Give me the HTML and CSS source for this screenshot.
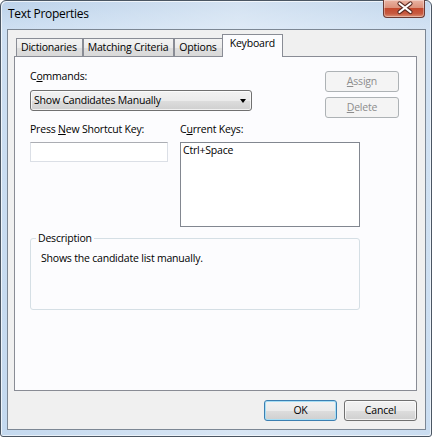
FILE: index.html
```html
<!DOCTYPE html>
<html>
	<head>
		<meta charset="utf-8">
		<title>Text Properties</title>
		<link rel="stylesheet" href="styles.css">
	</head>
	<body>
		<div class="window">
			<div class="titlebar">
				<span class="title">Text Properties</span>
				<div class="close">
					<svg width="42" height="18" viewBox="0 0 42 18">
						<path d="M15.5 4.5 L26.5 13 M26.5 4.5 L15.5 13" stroke="#5a2a22" stroke-width="4.2" stroke-linecap="round"/>
						<path d="M15.5 4.5 L26.5 13 M26.5 4.5 L15.5 13" stroke="#ffffff" stroke-width="2.2" stroke-linecap="round"/>
					</svg>
				</div>
			</div>
			<div class="client">
				<div class="tabs">
					<div class="tab">Dictionaries</div>
					<div class="tab">Matching Criteria</div>
					<div class="tab">Options</div>
					<div class="tab active">Keyboard</div>
				</div>
				<div class="panel">
					<div class="row-top">
						<div class="cmd">
							<div class="label">C<u>o</u>mmands:</div>
							<div class="combo">
								<span>Show Candidates Manually</span>
								<span class="arrow"></span>
							</div>
						</div>
						<div class="side">
							<div class="btn disabled"><u>A</u>ssign</div>
							<div class="btn disabled"><u>D</u>elete</div>
						</div>
					</div>
					<div class="row-keys">
						<div class="col-new">
							<div class="label">Press <u>N</u>ew Shortcut Key:</div>
							<div class="textbox"></div>
						</div>
						<div class="col-cur">
							<div class="label">C<u>u</u>rrent Keys:</div>
							<div class="listbox">Ctrl+Space</div>
						</div>
					</div>
					<fieldset class="desc">
						<legend>Description</legend>
						<p>Shows the candidate list manually.</p>
					</fieldset>
				</div>
				<div class="footer">
					<div class="btn default">OK</div>
					<div class="btn">Cancel</div>
				</div>
			</div>
		</div>
	</body>
</html>
```

FILE: styles.css
```css
*{
	margin: 0;
	padding: 0;
	box-sizing: border-box;
}
body{
	width: 432px;
	height: 437px;
	font-family: "Open Sans", "Liberation Sans", sans-serif;
	font-size: 10.5px;
	letter-spacing: -0.2px;
	line-height: 15px;
	color: #000;
	background: #fff;
}
.window{
	height: 437px;
	display: flex;
	flex-direction: column;
	padding: 0 5px 6px 6px;
	border: 1px solid #4b5663;
	border-radius: 6px 6px 3px 3px;
	background: linear-gradient(to right, rgba(255,255,255,0) 0%, rgba(255,255,255,0.35) 55%, rgba(255,255,255,0.1) 100%),
		linear-gradient(to bottom, #bcd2ea 0px, #cddff2 28px, #c4d9ef 100%);
	box-shadow: inset 1px 1px 0 rgba(255,255,255,0.7), inset -1px -1px 0 rgba(255,255,255,0.6);
}
.titlebar{
	height: 28px;
	display: flex;
	justify-content: space-between;
	align-items: flex-start;
}
.title{
	font-size: 12px;
	letter-spacing: -0.3px;
	line-height: 16px;
	margin: 5px 0 0 1px;
}
.close{
	width: 42px;
	height: 18px;
	margin: -1px 1px 0 0;
	border: 1px solid #6b3a33;
	border-top: 0;
	border-radius: 0 0 4px 4px;
	background: linear-gradient(to bottom, #eab3a3 0%, #dc927c 45%, #c4492e 50%, #c75a40 80%, #dc8f74 100%);
	box-shadow: inset 0 0 0 1px rgba(255,255,255,0.35);
}
.close svg{
	display: block;
	margin-top: -1px;
}
.client{
	flex: 1;
	display: flex;
	flex-direction: column;
	padding: 4px 8px 8px 6px;
	border: 1px solid #7c8794;
	background: #f0f0f0;
}
.tabs{
	height: 22px;
	display: flex;
	align-items: flex-end;
	padding-left: 2px;
}
.tab{
	height: 18px;
	padding: 1px 5px 0 4px;
	line-height: 15px;
	border: 1px solid #898c95;
	border-bottom: 0;
	background: linear-gradient(to bottom, #f3f3f3 0%, #ebebeb 50%, #dedede 51%, #d9d9d9 100%);
	white-space: nowrap;
}
.tab.active{
	height: 23px;
	margin: 0 0 -1px -1px;
	padding: 1px 7px 0 7px;
	background: #fcfcfe;
	position: relative;
	z-index: 1;
}
.panel{
	height: 335px;
	padding: 12px 17px 0 15px;
	border: 1px solid #898c95;
	background: #fcfcfe;
}
.row-top{
	display: flex;
	justify-content: space-between;
}
.cmd{
	width: 222px;
}
.label{
	height: 15px;
	white-space: nowrap;
}
.combo{
	height: 21px;
	margin-top: 6px;
	padding: 2px 5px 0 3px;
	display: flex;
	justify-content: space-between;
	border: 1px solid #707070;
	border-radius: 3px;
	background: linear-gradient(to bottom, #f2f2f2 0%, #ebebeb 50%, #dddddd 51%, #cfcfcf 100%);
	box-shadow: inset 0 0 0 1px rgba(255,255,255,0.7);
}
.arrow{
	width: 0;
	height: 0;
	margin-top: 6px;
	border-left: 3.5px solid transparent;
	border-right: 3.5px solid transparent;
	border-top: 4px solid #000;
}
.side{
	width: 74px;
	margin-top: 2px;
	display: flex;
	flex-direction: column;
	gap: 5px;
}
.btn{
	height: 21px;
	line-height: 19px;
	text-align: center;
	border: 1px solid #707070;
	border-radius: 3px;
	background: linear-gradient(to bottom, #f2f2f2 0%, #ebebeb 50%, #dddddd 51%, #cfcfcf 100%);
	box-shadow: inset 0 0 0 1px rgba(255,255,255,0.7);
}
.btn.disabled{
	color: #8d8d8d;
	border-color: #adb2b5;
	background: #f4f4f4;
	box-shadow: none;
}
.btn.default{
	border-color: #3c7fb1;
	box-shadow: inset 0 0 0 1px #a6def5;
}
.row-keys{
	display: flex;
	gap: 12px;
	margin-top: 4px;
}
.col-new{
	width: 138px;
}
.col-cur{
	width: 180px;
}
.textbox{
	height: 20px;
	margin-top: 5px;
	border: 1px solid #dbdfe6;
	border-top-color: #abadb3;
	background: #fff;
}
.listbox{
	height: 85px;
	margin-top: 5px;
	padding: 0 2px;
	border: 1px solid #828790;
	background: #fff;
}
.desc{
	width: 330px;
	height: 79px;
	margin-top: 4px;
	padding: 5px 10px 0 10px;
	border: 1px solid #d5dfe5;
	border-radius: 3px;
}
.desc legend{
	margin-left: -5px;
	padding: 0 2px;
}
.footer{
	display: flex;
	justify-content: flex-end;
	gap: 7px;
	margin-top: 9px;
}
.footer .btn{
	width: 73px;
}
```
